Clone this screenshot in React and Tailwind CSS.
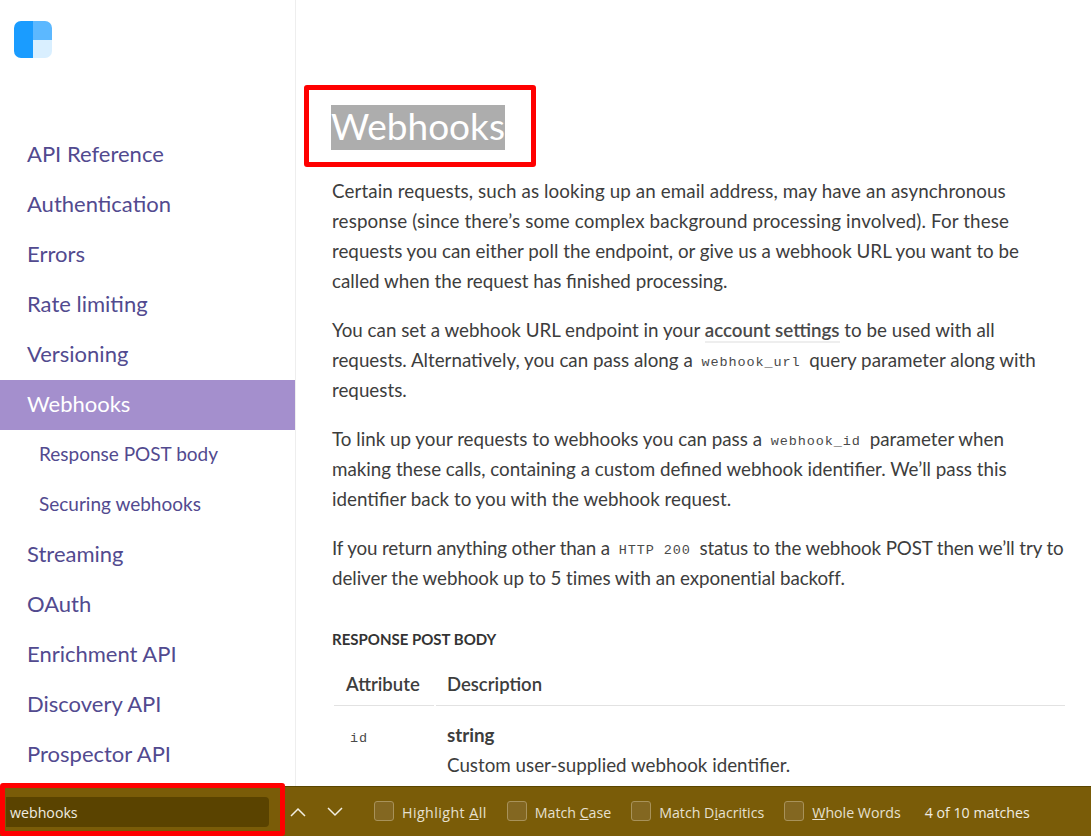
const NAV = [
  ["API Reference", 0],
  ["Authentication", 0],
  ["Errors", 0],
  ["Rate limiting", 0],
  ["Versioning", 0],
  ["Webhooks", 2],
  ["Response POST body", 1],
  ["Securing webhooks", 1],
  ["Streaming", 0],
  ["OAuth", 0],
  ["Enrichment API", 0],
  ["Discovery API", 0],
  ["Prospector API", 0],
];

function Code({ children }) {
  return <code className="relative -top-[1px] font-['Liberation_Mono',monospace] text-[13.5px] leading-none tracking-[0.9px] px-[4px] text-[#4a4a4a]">{children}</code>;
}

function Check({ children, wide }) {
  return (
    <div className="flex items-center gap-[8px]">
      <span className="w-[20px] h-[20px] rounded-[3px] border border-[#a8925a] bg-[#836721] box-border" />
      <span className={wide ? "text-[#e6e0d0] pt-[2px] tracking-[0.45px]" : "text-[#e6e0d0] pt-[2px]"}>{children}</span>
    </div>
  );
}

export default function App() {
  return (
    <div className="relative w-[1091px] h-[836px] overflow-hidden bg-white flex flex-col font-['Lato',sans-serif]">
      <div className="flex h-[786px] overflow-hidden">
        <aside className="w-[296px] shrink-0 border-r border-[#eeeeee] flex flex-col pt-[21px]">
          <svg width="38" height="37" viewBox="0 0 38 37" className="ml-[14px] shrink-0">
            <defs>
              <clipPath id="r"><rect width="38" height="37" rx="7" /></clipPath>
            </defs>
            <g clipPath="url(#r)">
              <rect width="19" height="37" fill="#1a9cff" />
              <rect x="19" width="19" height="19" fill="#5cb8ff" />
              <rect x="19" y="19" width="19" height="18" fill="#d9efff" />
            </g>
          </svg>
          <nav className="mt-[72px] flex flex-col">
            {NAV.map(([label, kind]) => (
              <div
                key={label}
                className={
                  kind === 2
                    ? "h-[50px] flex items-center pl-[27px] pb-[3px] text-[22px] bg-[#a48fcd] text-white"
                    : kind === 1
                    ? "h-[50px] flex items-center pl-[39px] pb-[1px] text-[19px] text-[#524a8f]"
                    : "h-[50px] flex items-center pl-[27px] pb-[3px] text-[22px] text-[#524a8f]"
                }
              >
                {label}
              </div>
            ))}
          </nav>
        </aside>
        <main className="flex-1 min-w-0 pl-[36px] pr-[26px] pt-[105px] text-[18.8px] leading-[30px] text-[#3d3d3d] whitespace-nowrap">
          <h1 className="text-[37px] leading-[41px] pb-[4px] font-normal text-white bg-[#adadad] w-fit -ml-[1px]">Webhooks</h1>
          <p className="mt-[26px]">
            <span className="tracking-[0.1px]">Certain requests, such as looking up an email address, may have an asynchronous</span><br />
            <span className="tracking-[0.13px]">response (since there’s some complex background processing involved). For these</span><br />
            requests you can either poll the endpoint, or give us a webhook URL you want to be<br />
            called when the request has finished processing.
          </p>
          <p className="mt-[19px]">
            You can set a webhook URL endpoint in your{" "}
            <a className="font-semibold border-b-2 border-[#eeeeee] text-[#4a4a4a]">account settings</a> to be used with all<br />
            requests. Alternatively, you can pass along a <Code>webhook_url</Code> query parameter along with<br />
            requests.
          </p>
          <p className="mt-[19px]">
            To link up your requests to webhooks you can pass a <Code>webhook_id</Code> parameter when<br />
            making these calls, containing a custom defined webhook identifier. We’ll pass this<br />
            identifier back to you with the webhook request.
          </p>
          <p className="mt-[19px]">
            <span className="tracking-[-0.13px]">If you return anything other than a <Code>HTTP 200</Code> status to the webhook POST then we’ll try to</span><br />
            <span className="tracking-[-0.08px]">deliver the webhook up to 5 times with an exponential backoff.</span>
          </p>
          <h4 className="mt-[36px] text-[15px] leading-[20px] font-bold text-[#333]">RESPONSE POST BODY</h4>
          <div className="mt-[10px] ml-[2px] flex text-[18.5px]">
            <div className="w-[100px] shrink-0 pl-[12px] h-[47px] pt-[4px] flex items-center font-semibold border-b border-[#e2e2e2]">Attribute</div>
            <div className="flex-1 ml-[2px] pl-[11px] h-[47px] pt-[4px] flex items-center font-semibold border-b border-[#e2e2e2]">Description</div>
          </div>
          <div className="ml-[2px] flex pt-[14px]">
            <div className="w-[102px] shrink-0 pl-[16px]"><code className="font-['Liberation_Mono',monospace] text-[13.5px] tracking-[0.9px] text-[#4a4a4a]">id</code></div>
            <div className="pl-[11px]">
              <div className="font-bold">string</div>
              <div>Custom user-supplied webhook identifier.</div>
            </div>
          </div>
        </main>
      </div>

      <div className="h-[50px] shrink-0 border-t border-[#5a4500] bg-[#7a5c08] flex items-center text-[14.2px] font-['Open_Sans',sans-serif]">
        <div className="ml-[6px] w-[263px] h-[30px] rounded-r-[4px] bg-[#5a4300] flex items-center pl-[4px] pt-[2px] text-[#f0ece0]">webhooks</div>
        <svg width="18" height="12" viewBox="0 0 18 12" className="ml-[20px]" fill="none" stroke="#f2eee2" strokeWidth="1.5">
          <path d="M2 10 L9 3 L16 10" />
        </svg>
        <svg width="18" height="12" viewBox="0 0 18 12" className="ml-[19px]" fill="none" stroke="#f2eee2" strokeWidth="1.5">
          <path d="M2 2 L9 9 L16 2" />
        </svg>
        <div className="ml-[30px] flex items-center gap-[20px]">
          <Check wide>Highlight <u>A</u>ll</Check>
          <Check>Match <u>C</u>ase</Check>
          <Check>Match D<u>i</u>acritics</Check>
          <Check><u>W</u>hole Words</Check>
        </div>
        <span className="ml-[24px] pt-[2px] text-[#f0ece0]">4 of 10 matches</span>
      </div>

      <div className="absolute left-[304px] top-[85px] w-[232px] h-[82px] border-[5px] border-[#ff0000] rounded-[3px]" />
      <div className="absolute left-0 top-[783px] w-[285px] h-[53px] border-[5px] border-[#ff0000] rounded-[3px]" />
    </div>
  );
}
